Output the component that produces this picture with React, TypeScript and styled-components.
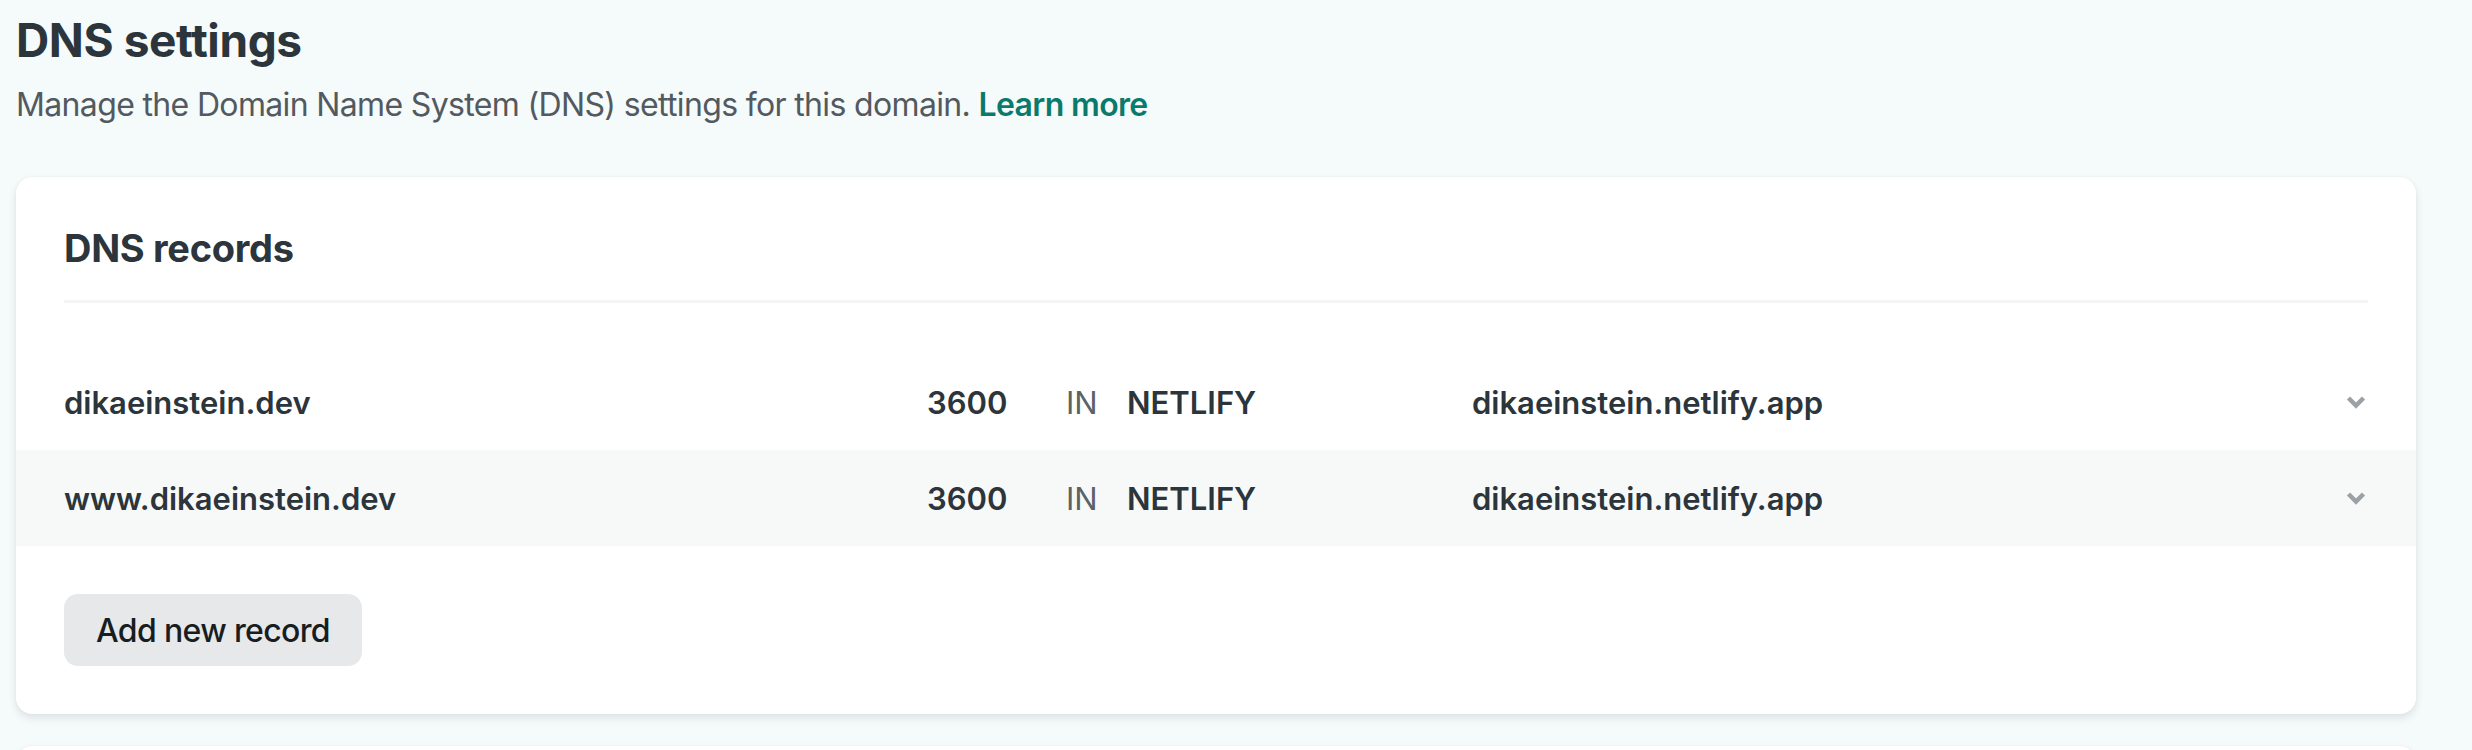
import React from "react";
import styled, { createGlobalStyle } from "styled-components";

const GlobalStyle = createGlobalStyle`
  html, body {
    margin: 0;
    padding: 0;
    background: #f5fafa;
    font-family: Inter, "Noto Sans", "Liberation Sans", sans-serif;
    -webkit-font-smoothing: antialiased;
  }
`;

const Page = styled.main`
  width: 2400px;
  padding: 12px 16px 0;
  box-sizing: content-box;
`;

const Title = styled.h1`
  margin: 0;
  font-size: 46px;
  line-height: 56px;
  font-weight: 700;
  letter-spacing: -0.4px;
  color: #2b353b;
`;

const Lead = styled.p`
  margin: 17px 0 0;
  font-size: 32px;
  line-height: 40px;
  font-weight: 400;
  letter-spacing: -0.65px;
  color: #52595f;
`;

const LearnLink = styled.a`
  color: #0b7a6c;
  font-weight: 600;
  text-decoration: none;
`;

const Card = styled.section`
  margin-top: 52px;
  background: #ffffff;
  border-radius: 16px;
  box-shadow: 0 4px 8px 0 rgba(14, 30, 37, 0.1), 0 0 2px 0 rgba(14, 30, 37, 0.06);
  padding: 47px 0 48px;
`;

const NextCard = styled(Card)`
  margin-top: 32px;
  min-height: 200px;
`;

const CardHeader = styled.header`
  margin: 0 48px;
  padding-bottom: 28px;
  border-bottom: 3px solid #f3f5f5;
`;

const CardTitle = styled.h2`
  margin: 0;
  font-size: 38px;
  line-height: 48px;
  font-weight: 700;
  letter-spacing: -0.3px;
  color: #2b353b;
`;

const RecordList = styled.ul`
  list-style: none;
  margin: 51px 0 0;
  padding: 0;
`;

const RecordRow = styled.li<{ $alt?: boolean }>`
  display: grid;
  grid-template-columns: 863px 139px 61px 345px 1fr 20px;
  align-items: center;
  height: 96px;
  padding: 0 50px 0 48px;
  box-sizing: border-box;
  background: ${(p) => (p.$alt ? "#f7f9f9" : "transparent")};
  font-size: 31px;
  color: #2b353b;
`;

const Cell = styled.span<{ $muted?: boolean }>`
  font-weight: ${(p) => (p.$muted ? 400 : 600)};
  color: ${(p) => (p.$muted ? "#5b6268" : "#2b353b")};
  white-space: nowrap;
`;

const Chevron = styled.svg`
  width: 20px;
  height: 14px;
  display: block;
`;

const Footer = styled.div`
  margin: 48px 48px 0;
`;

const Button = styled.button`
  height: 72px;
  padding: 0 32px;
  border: none;
  border-radius: 14px;
  background: #e7e8ea;
  color: #181d21;
  font-family: inherit;
  font-size: 32px;
  font-weight: 500;
  letter-spacing: -0.65px;
  cursor: pointer;
`;

type Rec = { name: string; ttl: string; cls: string; type: string; value: string };

const records: Rec[] = [
  { name: "dikaeinstein.dev", ttl: "3600", cls: "IN", type: "NETLIFY", value: "dikaeinstein.netlify.app" },
  { name: "www.dikaeinstein.dev", ttl: "3600", cls: "IN", type: "NETLIFY", value: "dikaeinstein.netlify.app" },
];

const ChevronDown = () => (
  <Chevron viewBox="0 0 20 14" aria-hidden="true">
    <polyline
      points="2.5,3 10,10.5 17.5,3"
      fill="none"
      stroke="#9ca1a6"
      strokeWidth="4.5"
      strokeLinecap="butt"
      strokeLinejoin="miter"
    />
  </Chevron>
);

export default function App() {
  return (
    <>
      <GlobalStyle />
      <Page>
        <Title>DNS settings</Title>
        <Lead>
          Manage the Domain Name System (DNS) settings for this domain.{" "}
          <LearnLink href="#">Learn more</LearnLink>
        </Lead>
        <Card>
          <CardHeader>
            <CardTitle>DNS records</CardTitle>
          </CardHeader>
          <RecordList>
            {records.map((r, i) => (
              <RecordRow key={r.name} $alt={i % 2 === 1}>
                <Cell>{r.name}</Cell>
                <Cell>{r.ttl}</Cell>
                <Cell $muted>{r.cls}</Cell>
                <Cell>{r.type}</Cell>
                <Cell>{r.value}</Cell>
                <ChevronDown />
              </RecordRow>
            ))}
          </RecordList>
          <Footer>
            <Button type="button">Add new record</Button>
          </Footer>
        </Card>
        <NextCard />
      </Page>
    </>
  );
}
